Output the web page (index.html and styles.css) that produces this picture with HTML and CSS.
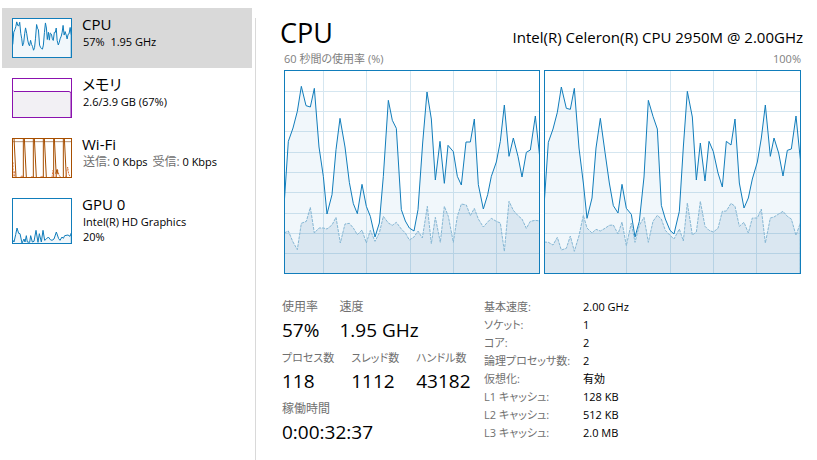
FILE: index.html
```html
<!DOCTYPE html>
<html lang="ja">
<head>
<meta charset="utf-8">
<title>CPU</title>
<link rel="stylesheet" href="styles.css">
</head>
<body>
<svg class="defs" aria-hidden="true">
  <defs>
    <g id="grid">
      <path d="M146 31V643M276 31V643M406 31V643M536 31V643M666 31V643M28 94.500H796M28 154.500H796M28 214.500H796M28 277.500H796M28 337.500H796M28 397.500H796M28 460.500H796M28 520.500H796M28 580.500H796"/>
    </g>
    <path id="core0" d="M28 440L41 245 55 205 68 155 80 80 94 138 107 142 119 86 133 262 146 350 157 463 172 405 184 270 196 176 211 262 224 368 236 432 248 462 262 374 275 440 287 470 301 532 314 490 326 350 341 122 353 182 365 206 380 450 392 484 404 505 418 514 430 450 444 250 457 97 470 178 482 361 496 245 509 371 520 257 536 276 548 350 560 376 574 247 587 247 599 178 611 375 626 448 639 405 650 350 665 307 677 245 689 136 703 290 716 235 730 290 742 352 755 278 767 271 782 169 796 300V660H28"/>
    <path id="kernel0" d="M28 520L41 514 55 547 68 570 80 491 95 485 107 443 119 520 133 505 146 505 157 508 172 496 184 473 197 550 211 493 224 491 236 505 248 525 262 511 275 550 287 512 301 545 314 520 326 470 341 490 353 497 365 488 380 508 392 520 404 541 418 532 430 514 443 535 458 440 470 552 482 473 497 548 509 440 521 470 536 548 548 470 560 433 575 436 587 468 599 446 611 478 626 502 639 487 650 476 665 485 677 490 689 575 703 425 716 452 730 468 742 478 755 506 767 485 782 482 796 484V660H28"/>
    <path id="core1" d="M28 440L41 248 55 208 68 158 80 82 95 146 107 149 119 86 133 265 146 370 157 476 172 415 184 265 197 176 211 278 224 370 236 438 250 460 262 374 275 446 290 464 301 532 314 485 328 352 341 122 355 170 368 208 380 437 392 478 406 512 418 523 434 455 446 262 458 95 473 172 485 361 497 250 511 364 523 245 536 276 550 340 563 382 575 245 589 256 601 178 614 370 628 445 641 415 653 358 668 307 680 235 692 136 707 290 718 235 732 280 745 349 758 272 770 268 784 169 797 300V660H28"/>
    <path id="kernel1" d="M28 547L41 548 55 556 68 533 80 571 95 566 107 529 119 575 133 528 146 467 157 505 172 520 184 509 197 514 211 506 224 497 236 496 250 523 262 487 275 558 290 490 301 548 314 497 328 473 341 548 355 485 368 467 380 478 392 512 406 527 418 538 434 508 446 544 458 430 473 526 485 517 497 425 511 500 523 512 536 517 550 506 563 455 575 454 589 431 601 440 614 500 628 488 641 520 653 475 668 475 680 448 692 550 707 475 718 472 732 463 745 455 758 470 770 478 784 527 797 490V660H28"/>
  </defs>
</svg>
<div class="app">
  <nav class="sidebar">
    <button class="item selected" type="button">
      <svg class="thumb" viewBox="31 34 762 606" preserveAspectRatio="none"><use class="load" href="#core0"/></svg>
      <span class="info"><span class="name">CPU</span><span class="detail">57%&nbsp; 1.95 GHz</span></span>
    </button>
    <button class="item" type="button">
      <svg class="thumb memory" viewBox="0 0 58 38" preserveAspectRatio="none"><path d="M-1 11.500H0L1 12.500H56L58 13.500V40H-1Z"/></svg>
      <span class="info"><span class="name">メモリ</span><span class="detail">2.6/3.9 GB (67%)</span></span>
    </button>
    <button class="item" type="button">
      <svg class="thumb wifi" viewBox="25 28 174 114" preserveAspectRatio="none">
        <path class="cap" d="M22 36H202"/>
        <path class="burst" d="M28 25L34 143M56 143V25M59 25L65 143M86 143V25M89 25L95 143M116 143V25M119 25L125 143M147 143V25M149 25L155 143M176 143V25M179 25L185 143"/>
        <path class="receive" d="M25 98V143M29 125V143M48 143L52 137 56 143M80 143L83 139 87 143M107 143L112 138 116 143M142 143L145 122 147 143M154 143L158 118 163 136 168 143M183 143L189 112 192 133 198 143"/>
        <path class="burst" d="M153 132L157 120 160 134"/>
      </svg>
      <span class="info"><span class="name">Wi-Fi</span><span class="detail"><span class="muted">送信:</span> 0 Kbps <span class="muted">受信:</span> 0 Kbps</span></span>
    </button>
    <button class="item" type="button">
      <svg class="thumb tall" viewBox="25 208 174 132" preserveAspectRatio="none"><path class="load" d="M22 328L28 337 33 315 37 295 42 311 46 312 52 340 58 328 61 337 65 318 68 337 75 338 78 318 83 337 88 335 94 302 100 338 104 312 110 337 115 302 120 332 125 328 131 322 137 330 142 332 148 328 155 307 162 327 166 332 172 322 176 326 180 318 190 316 196 320 200 310V350H22"/></svg>
      <span class="info"><span class="name">GPU 0</span><span class="detail">Intel(R) HD Graphics</span><span class="detail">20%</span></span>
    </button>
  </nav>
  <main class="main">
    <header class="header">
      <h1>CPU</h1>
      <p class="model">Intel(R) Celeron(R) CPU 2950M @ 2.00GHz</p>
    </header>
    <div class="axis"><span>60 秒間の使用率 (%)</span><span>100%</span></div>
    <div class="charts">
      <svg class="chart" viewBox="31 34 762 606" preserveAspectRatio="none" role="img" aria-label="CPU 0">
        <use class="grid" href="#grid"/><use class="load" href="#core0"/><use class="kernel" href="#kernel0"/>
      </svg>
      <svg class="chart" viewBox="31 34 765 606" preserveAspectRatio="none" role="img" aria-label="CPU 1">
        <use class="grid" href="#grid"/><use class="load" href="#core1"/><use class="kernel" href="#kernel1"/>
      </svg>
    </div>
    <section class="stats">
      <div class="live">
        <dl class="row">
          <div><dt>使用率</dt><dd>57%</dd></div>
          <div><dt>速度</dt><dd>1.95 GHz</dd></div>
        </dl>
        <dl class="row counts">
          <div><dt>プロセス数</dt><dd>118</dd></div>
          <div><dt>スレッド数</dt><dd>1112</dd></div>
          <div><dt>ハンドル数</dt><dd>43182</dd></div>
        </dl>
        <dl class="row">
          <div><dt>稼働時間</dt><dd>0:00:32:37</dd></div>
        </dl>
      </div>
      <dl class="specs">
        <dt>基本速度:</dt><dd>2.00 GHz</dd>
        <dt>ソケット:</dt><dd>1</dd>
        <dt>コア:</dt><dd>2</dd>
        <dt>論理プロセッサ数:</dt><dd>2</dd>
        <dt>仮想化:</dt><dd>有効</dd>
        <dt>L1 キャッシュ:</dt><dd>128 KB</dd>
        <dt>L2 キャッシュ:</dt><dd>512 KB</dd>
        <dt>L3 キャッシュ:</dt><dd>2.0 MB</dd>
      </dl>
    </section>
  </main>
</div>
</body>
</html>
```
FILE: styles.css
```css
* { box-sizing: border-box; }

body {
  margin: 0;
  background: #fff;
  color: #000;
  font-family: "Open Sans", "Noto Sans CJK JP", sans-serif;
  font-size: 12px;
  line-height: 18px;
  font-feature-settings: "palt";
}

h1, p, dl, dd { margin: 0; }

.defs { position: absolute; width: 0; height: 0; }

.app { display: flex; min-height: 100vh; }

.sidebar {
  flex: 0 0 252px;
  padding: 8px 0 0 2px;
}

.item {
  display: flex;
  gap: 10px;
  width: 100%;
  height: 60px;
  padding: 10px;
  border: 0;
  background: none;
  color: inherit;
  font: inherit;
  font-feature-settings: inherit;
  text-align: left;
}

.selected { background: #d9d9d9; }

.thumb {
  flex: none;
  width: 60px;
  height: 40px;
  border: 1px solid #117dbb;
  background: #fff;
}

.tall { height: 46px; }

.info {
  display: flex;
  flex-direction: column;
  margin-top: -4px;
  white-space: nowrap;
}

.name { font-size: 15px; line-height: 20px; }
.detail { font-size: 11px; line-height: 15px; padding-left: 1px; }
.muted { color: #707070; font-size: 12px; }
.detail .muted + .muted { margin-left: 2px; }

.load, .kernel, .grid, .thumb path { vector-effect: non-scaling-stroke; }
.defs path { vector-effect: non-scaling-stroke; }

.load { fill: rgba(17, 125, 187, 0.06); stroke: #117dbb; }
.kernel { fill: rgba(17, 100, 155, 0.1); stroke: #86b7d4; stroke-dasharray: 3 1; }
.grid { fill: none; stroke: #d5e6f0; shape-rendering: crispEdges; }

.memory { border-color: #8b12ae; }
.memory path { fill: #f2f0f4; stroke: #8b12ae; }

.wifi { border-color: #a74f01; }
.wifi path { fill: none; stroke: #a74f01; }
.wifi .cap { stroke: #b59478; }
.wifi .receive { stroke: #d8743c; stroke-dasharray: 2 1; }

.main {
  flex: 1;
  min-width: 0;
  margin: 18px 0 0 3px;
  padding: 0 16px 0 28px;
  border-left: 1px solid #d9d9d9;
}

.header {
  display: flex;
  justify-content: space-between;
  align-items: baseline;
  margin: -3px -2px 0 -4px;
}

h1 { font-size: 27px; font-weight: 400; line-height: 36px; }
.model { font-size: 15px; line-height: 20px; }

.axis {
  display: flex;
  justify-content: space-between;
  color: #808080;
  font-size: 11px;
  line-height: 16px;
  padding-bottom: 3px;
}

.charts { display: grid; grid-template-columns: 256fr 257fr; gap: 4px; }

.chart {
  width: 100%;
  height: 204px;
  border: 1px solid #117dbb;
}

.stats { display: flex; margin: 24px 0 0 -2px; }
.live { flex: 0 0 202px; }
.row { display: flex; gap: 20px; height: 51px; white-space: nowrap; }
.counts { gap: 17px; }
dt { color: #707070; }
.row dd { font-size: 19px; line-height: 28px; }
.counts dt, .specs { font-size: 11px; }

.specs {
  display: grid;
  grid-template-columns: 99px auto;
  align-content: start;
  white-space: nowrap;
}
```
